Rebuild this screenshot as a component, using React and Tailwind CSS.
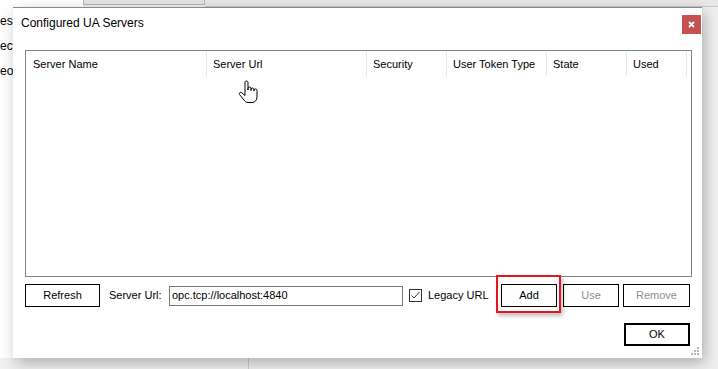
import React from 'react'

const columns = [
  { title: 'Server Name', width: 'w-[181px]', pad: 'pl-[7px]' },
  { title: 'Server Url', width: 'w-[160px]', pad: 'pl-[6px]' },
  { title: 'Security', width: 'w-[80px]', pad: 'pl-[6px]' },
  { title: 'User Token Type', width: 'w-[100px]', pad: 'pl-[6px]' },
  { title: 'State', width: 'w-[80px]', pad: 'pl-[6px]' },
  { title: 'Used', width: 'w-[60px]', pad: 'pl-[6px]' },
]

// windows style hand pointer
const HandCursor = () => (
  <svg width="20" height="24" viewBox="0 0 20 24" className="absolute left-[238px] top-[80px]">
    <path
      d="M7 14 V2.5 a1.5 1.5 0 0 1 3 0 V10 V8.5 a1.5 1.5 0 0 1 3 0 V10.5 V9.5 a1.5 1.5 0 0 1 3 0 V11 V10.5 a1.5 1.5 0 0 1 3 0 V17 c0 3 -2 5.5 -5 5.5 H10 c-2 0 -3 -1 -4 -2.5 L1.6 14.6 a1.4 1.4 0 0 1 2.2 -1.8 L7 15.5 Z"
      fill="white"
      stroke="black"
      strokeWidth="1"
      strokeLinejoin="round"
    />
  </svg>
)

const Grip = () => (
  <svg width="9" height="9" viewBox="0 0 9 9" className="absolute right-[2px] bottom-[2px]">
    {[[6, 0], [3, 3], [6, 3], [0, 6], [3, 6], [6, 6]].map(([x, y]) => (
      <rect key={`${x}-${y}`} x={x} y={y} width="2" height="2" fill="#b8b8b8" />
    ))}
  </svg>
)

function Button({ children, className = '', disabled }) {
  return (
    <button
      className={`h-[23px] border border-black bg-white flex items-center justify-center ${
        disabled ? 'text-[#8d8d8d]' : 'text-black'
      } ${className}`}
    >
      {children}
    </button>
  )
}

export default function App() {
  return (
    <div className="relative w-[718px] h-[369px] overflow-hidden bg-[#f0f0f0] text-[11px] text-black font-['Liberation_Sans',Arial,sans-serif]">
      {/* window behind the dialog */}
      <div className="flex h-full flex-col">
        <div className="flex h-[7px]">
          <div className="w-[83px] bg-white" />
          <div className="w-[122px] h-[5px] bg-[#e5e5e5] border border-t-0 border-[#b5b5b5]" />
          <div className="flex-1 bg-[#e9e9e9] border-b border-[#c8c8c8]" />
        </div>
        <div className="flex flex-1">
          <div className="w-[249px] bg-white border-r border-[#d4d4d4] flex flex-col gap-[13px] pt-[8px] text-[12px] leading-[12px]">
            <span>ess</span>
            <span>ect</span>
            <span>eo</span>
          </div>
          <div className="flex-1" />
        </div>
        <div className="flex h-[11px]">
          <div className="w-[249px] border-r border-[#cfcfcf]" />
        </div>
      </div>

      {/* dialog */}
      <div className="absolute left-[13px] top-[7px] w-[689px] h-[351px] bg-white border-t border-[#8a8a8a] shadow-[3px_5px_14px_rgba(0,0,0,0.28)] flex flex-col">
        <div className="flex h-[42px] items-start justify-between">
          <span className="ml-[8px] mt-[7px] leading-[16px] text-[12px]">Configured UA Servers</span>
          <div className="mt-[7px] mr-[1px] w-[19px] h-[19px] bg-[#c75050] flex items-center justify-center">
            <svg width="7" height="7" viewBox="0 0 7 7">
              <path d="M1 1 L6 6 M6 1 L1 6" stroke="white" strokeWidth="1.8" />
            </svg>
          </div>
        </div>

        <div className="ml-[12px] w-[667px] h-[227px] border border-[#828282] bg-white">
          <div className="flex h-[25px] pt-[1px]">
            {columns.map((c) => (
              <div
                key={c.title}
                className={`${c.width} ${c.pad} h-[24px] border-r border-[#e5e5e5] flex items-center leading-[14px]`}
              >
                {c.title}
              </div>
            ))}
          </div>
        </div>

        <div className="mt-[7px] ml-[12px] flex items-center h-[23px]">
          <Button className="w-[75px]">Refresh</Button>
          <span className="ml-[9px] w-[60px]">Server Url:</span>
          <div className="w-[234px] h-[20px] border border-[#7a7a7a] flex items-center pl-[2px]">
            opc.tcp://localhost:4840
          </div>
          <div className="ml-[6px] w-[13px] h-[13px] border border-[#333] flex items-center justify-center">
            <svg width="11" height="11" viewBox="0 0 11 11">
              <path d="M1.5 5.5 L4 8 L9.5 2" stroke="#333" strokeWidth="1" fill="none" />
            </svg>
          </div>
          <span className="ml-[6px] w-[73px]">Legacy URL</span>
          <div className="relative">
            <Button className="w-[56px]">Add</Button>
            <div className="absolute -left-[5px] -top-[9px] w-[65px] h-[38px] border-2 border-[#e8141c] shadow-[2px_3px_4px_rgba(0,0,0,0.25)]" />
          </div>
          <Button className="ml-[6px] w-[56px]" disabled>Use</Button>
          <Button className="ml-[4px] w-[67px]" disabled>Remove</Button>
        </div>

        <div className="mt-[16px] flex justify-end pr-[12px]">
          <Button className="w-[66px] border-2">OK</Button>
        </div>

        <Grip />
      </div>

      <HandCursor />
    </div>
  )
}
